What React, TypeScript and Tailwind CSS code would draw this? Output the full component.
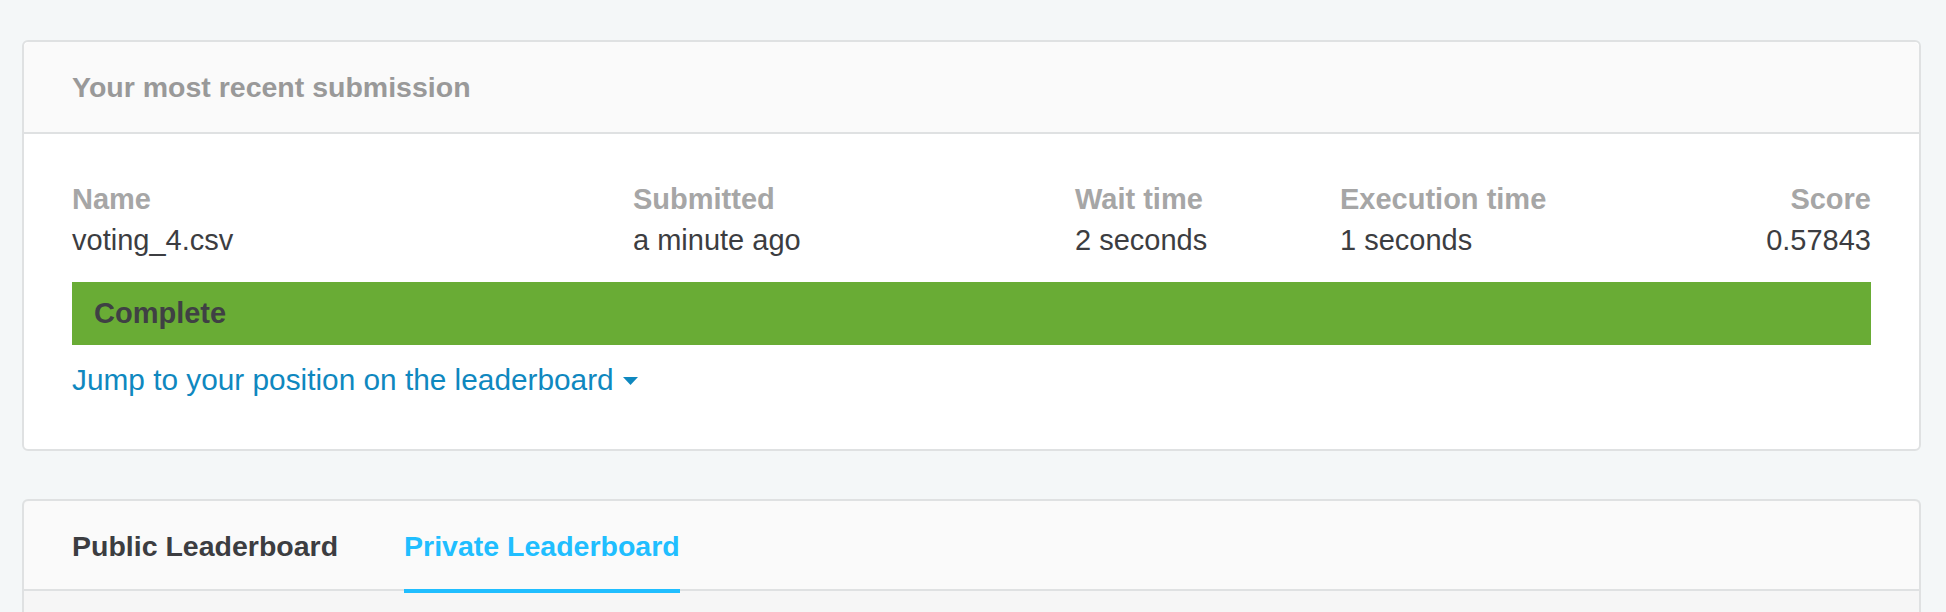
export default function App() {
  const cols = [
    { label: 'Name', value: 'voting_4.csv' },
    { label: 'Submitted', value: 'a minute ago' },
    { label: 'Wait time', value: '2 seconds' },
    { label: 'Execution time', value: '1 seconds' },
  ];

  return (
    <div
      className="min-h-screen bg-[#f4f7f8] pt-[40px] pl-[22px] pr-[25px]"
      style={{ fontFamily: '"Liberation Sans", Arial, sans-serif' }}
    >
      <div className="rounded-[6px] border-2 border-[#dfe1e2] bg-white">
        <div className="flex h-[92px] items-center rounded-t-[6px] border-b-2 border-[#dfe1e2] bg-[#fafafa] px-[48px]">
          <h2 className="text-[28.5px] font-bold text-[#999999]">Your most recent submission</h2>
        </div>

        <div className="px-[48px] pt-[45px] pb-[49px]">
          <div className="grid grid-cols-[561px_442px_265px_1fr_auto] text-[29px] leading-[41px]">
            {cols.map((c) => (
              <div key={c.label} className="flex flex-col">
                <span className="font-bold text-[#a6a6a6]">{c.label}</span>
                <span className="text-[#3c3d41]">{c.value}</span>
              </div>
            ))}
            <div className="flex flex-col items-end">
              <span className="font-bold text-[#a6a6a6]">Score</span>
              <span className="text-[#3c3d41]">0.57843</span>
            </div>
          </div>

          <div className="mt-[21px] flex h-[63px] items-center bg-[#69ac35] px-[22px]">
            <span className="text-[29px] font-bold text-[#3f4044]">Complete</span>
          </div>

          <a className="mt-[14px] flex items-center gap-[9px] text-[29.8px] leading-[41px] text-[#0f88bf]">
            <span>Jump to your position on the leaderboard</span>
            <svg width="15" height="8" viewBox="0 0 15 8" className="mt-[3px]">
              <polygon points="0,0 15,0 7.5,8" fill="#0f88bf" />
            </svg>
          </a>
        </div>
      </div>

      <div className="mt-[48px] rounded-t-[6px] border-2 border-b-0 border-[#dfe1e2] bg-[#f6f6f6]">
        <div className="flex h-[90px] gap-[66px] rounded-t-[6px] border-b-2 border-[#dfe1e2] bg-[#fafafa] px-[48px]">
          <div className="flex h-full items-center border-b-4 border-transparent pt-[6px] text-[28.5px] font-bold text-[#3c3d41]">
            Public Leaderboard
          </div>
          <div className="flex h-[92px] items-center border-b-4 border-[#20beff] pt-[2px] text-[28.5px] font-bold text-[#20beff]">
            Private Leaderboard
          </div>
        </div>
        <div className="h-[120px]" />
      </div>
    </div>
  );
}
